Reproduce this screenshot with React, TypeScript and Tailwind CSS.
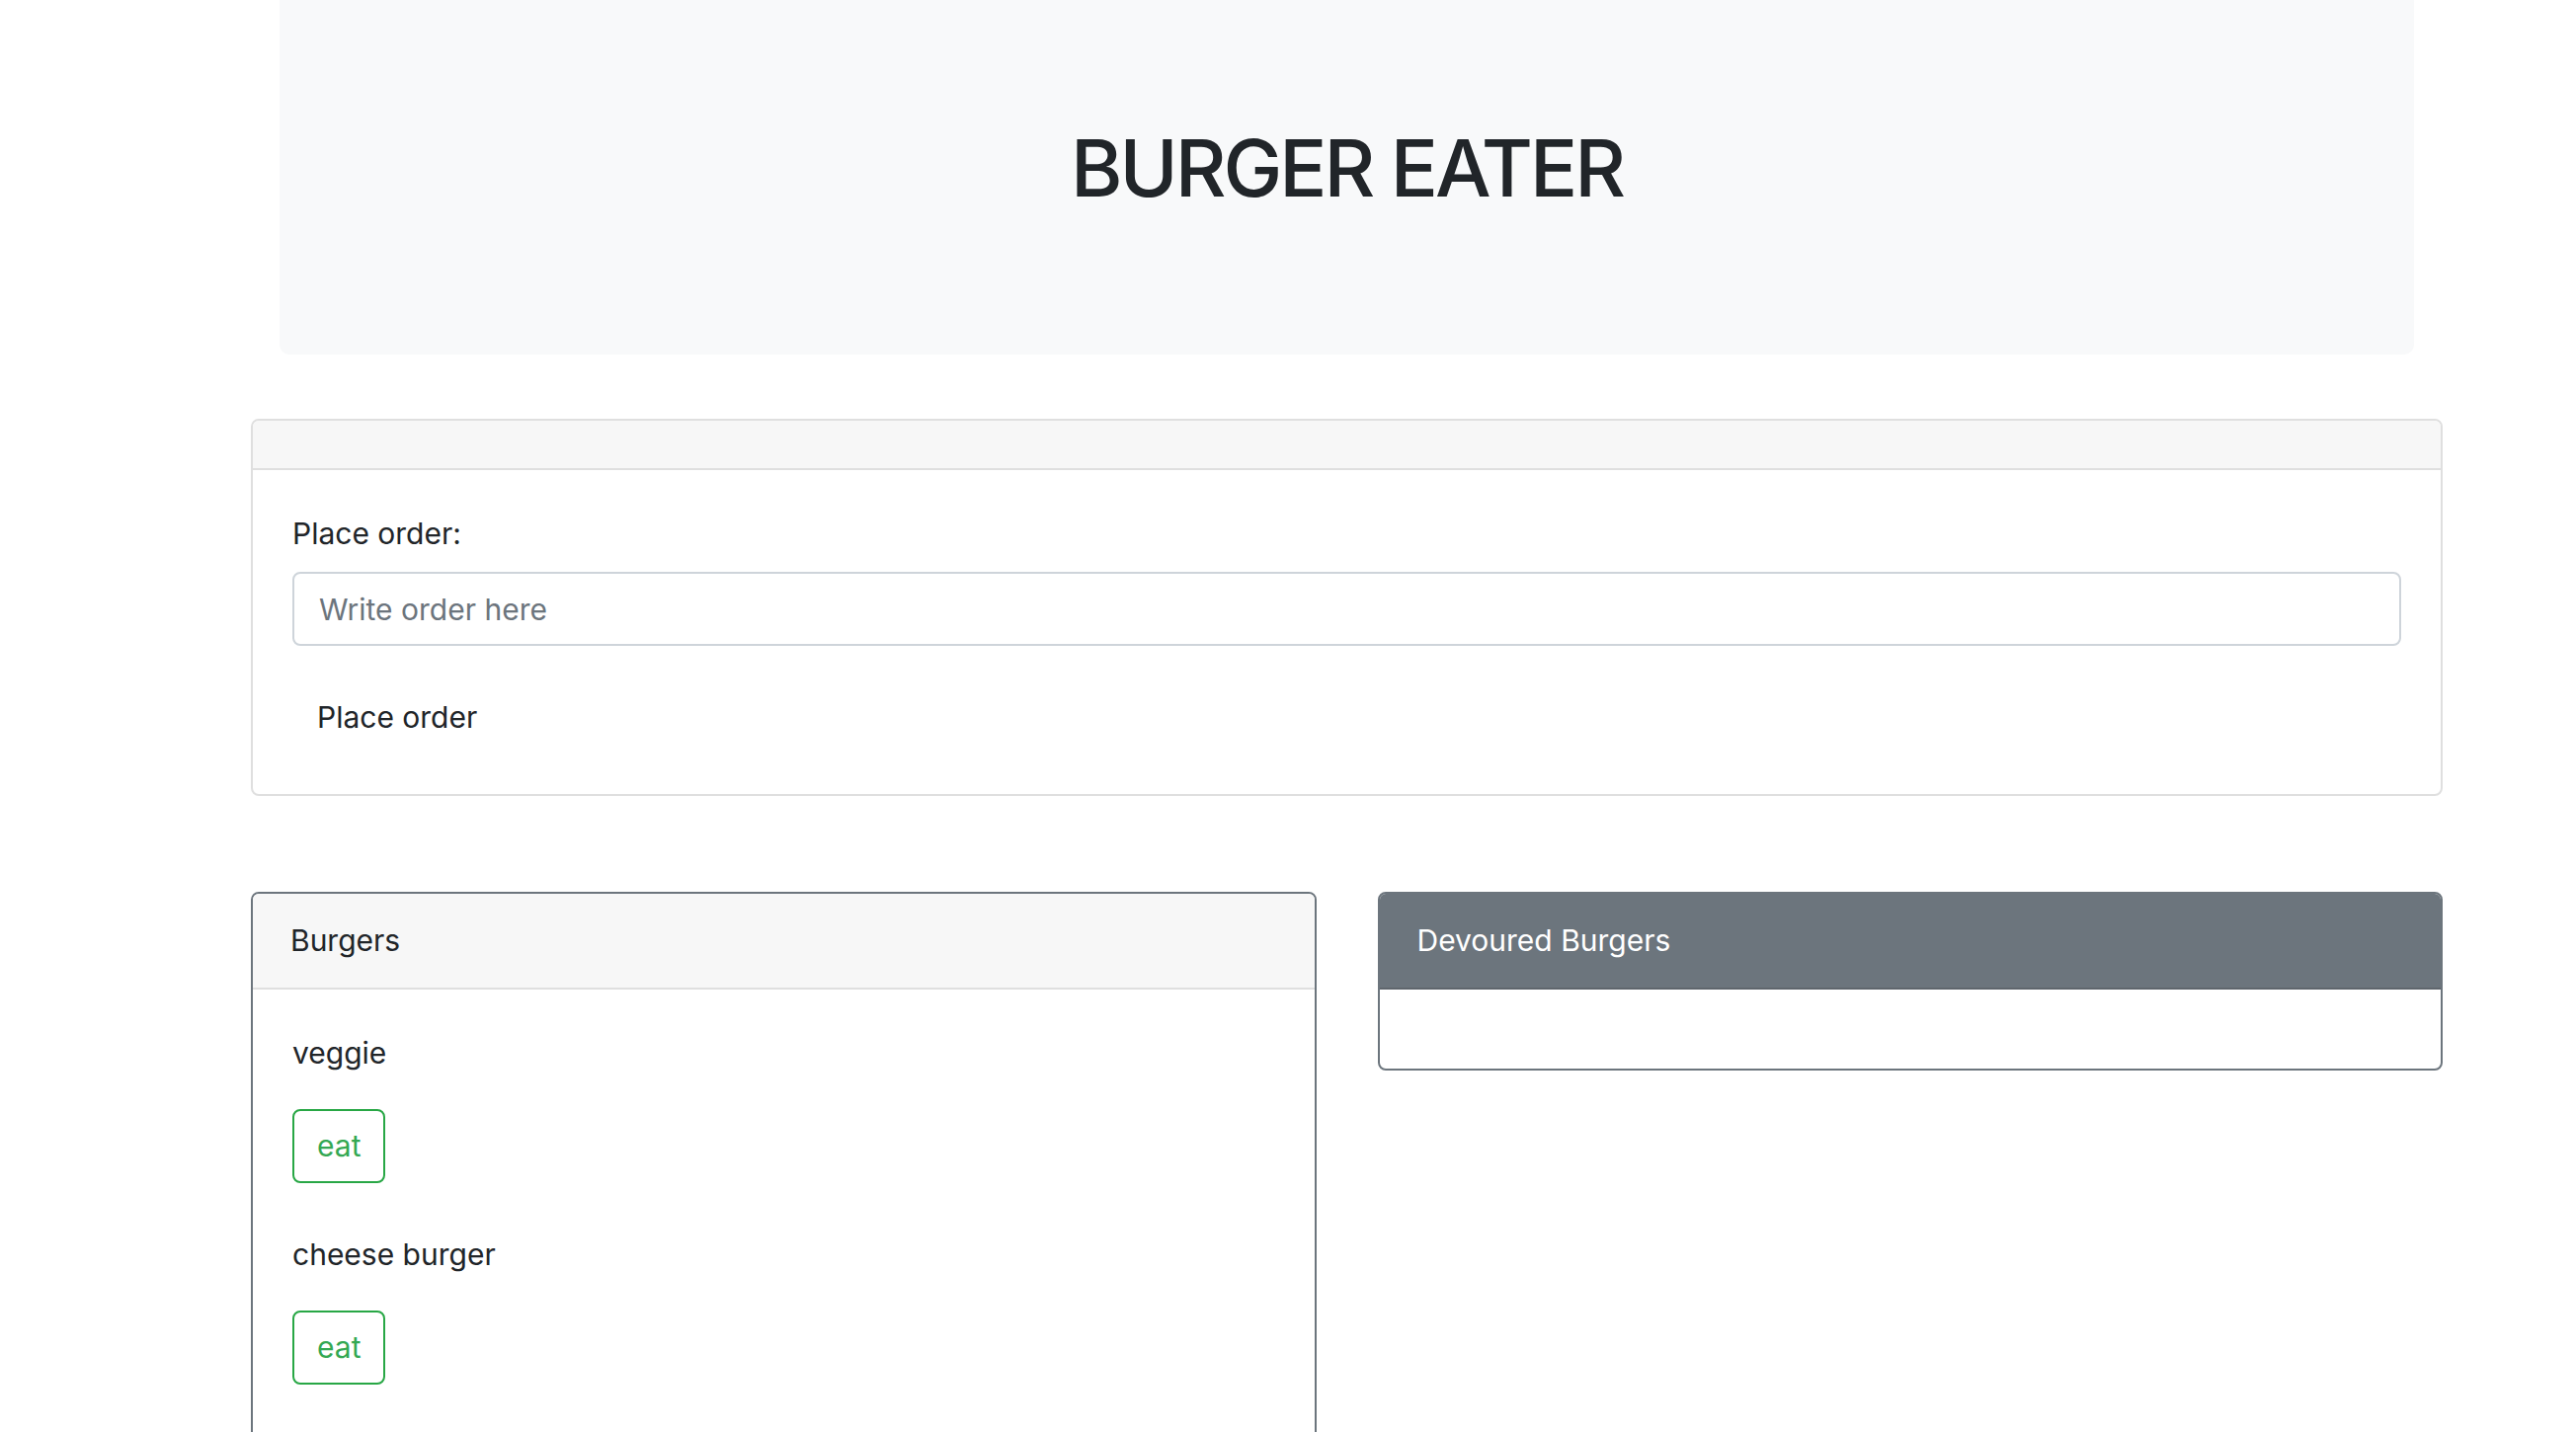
import React from "react";

const burgers = ["veggie", "cheese burger"];

// Simple outline "eat" button
const EatButton = () => (
  <button className="h-[75px] px-[23px] rounded-[8px] border-2 border-[#28a745] text-[#34a853] text-[30px] leading-[45px] bg-white">
    eat
  </button>
);

export default function App() {
  return (
    <div className="min-h-screen bg-white text-[#212529] font-['Inter','Noto_Sans',sans-serif] text-[30px] leading-[45px]">
      <div className="pl-[254px]">
        <div className="w-[2219px] flex flex-col">
          {/* header / jumbotron */}
          <div className="mx-[29px] h-[359px] pb-[20px] bg-[#f8f9fa] rounded-b-[10px] flex items-center justify-center">
            <h1 className="text-[80px] font-medium leading-none tracking-[-3px]">BURGER EATER</h1>
          </div>

          {/* order form */}
          <div className="mt-[65px] border-2 border-[#dfdfdf] rounded-[8px] overflow-hidden">
            <div className="h-[50px] bg-[#f7f7f7] border-b-2 border-[#dfdfdf]"></div>
            <div className="px-[40px] pt-[42px] pb-[40px] flex flex-col">
              <label className="block">Place order:</label>
              <input
                type="text"
                placeholder="Write order here"
                className="mt-[16px] h-[75px] w-full border-2 border-[#ced4da] rounded-[8px] px-[25px] text-[30px] placeholder:text-[#6c757d] outline-none"
              />
              <div className="mt-[35px]">
                <button className="h-[75px] px-[25px] text-[30px] text-[#212529] bg-transparent">Place order</button>
              </div>
            </div>
          </div>

          {/* burger lists */}
          <div className="mt-[97px] flex gap-[62px] items-start">
            <div className="flex-1 border-2 border-[#6c757d] rounded-[8px] overflow-hidden">
              <div className="px-[38px] py-[25px] bg-[#f7f7f7] border-b-2 border-[#dfdfdf]">Burgers</div>
              <div className="px-[40px] pt-[42px] pb-[60px] flex flex-col gap-[50px]">
                {burgers.map((b) => (
                  <div key={b} className="flex flex-col items-start">
                    <div>{b}</div>
                    <div className="mt-[34px]">
                      <EatButton />
                    </div>
                  </div>
                ))}
              </div>
            </div>

            <div className="flex-1 border-2 border-[#6c757d] rounded-[8px] overflow-hidden">
              <div className="px-[38px] py-[25px] bg-[#6c757d] text-white border-b-2 border-[#5f666d]">Devoured Burgers</div>
              <div className="h-[80px]"></div>
            </div>
          </div>
        </div>
      </div>
    </div>
  );
}
